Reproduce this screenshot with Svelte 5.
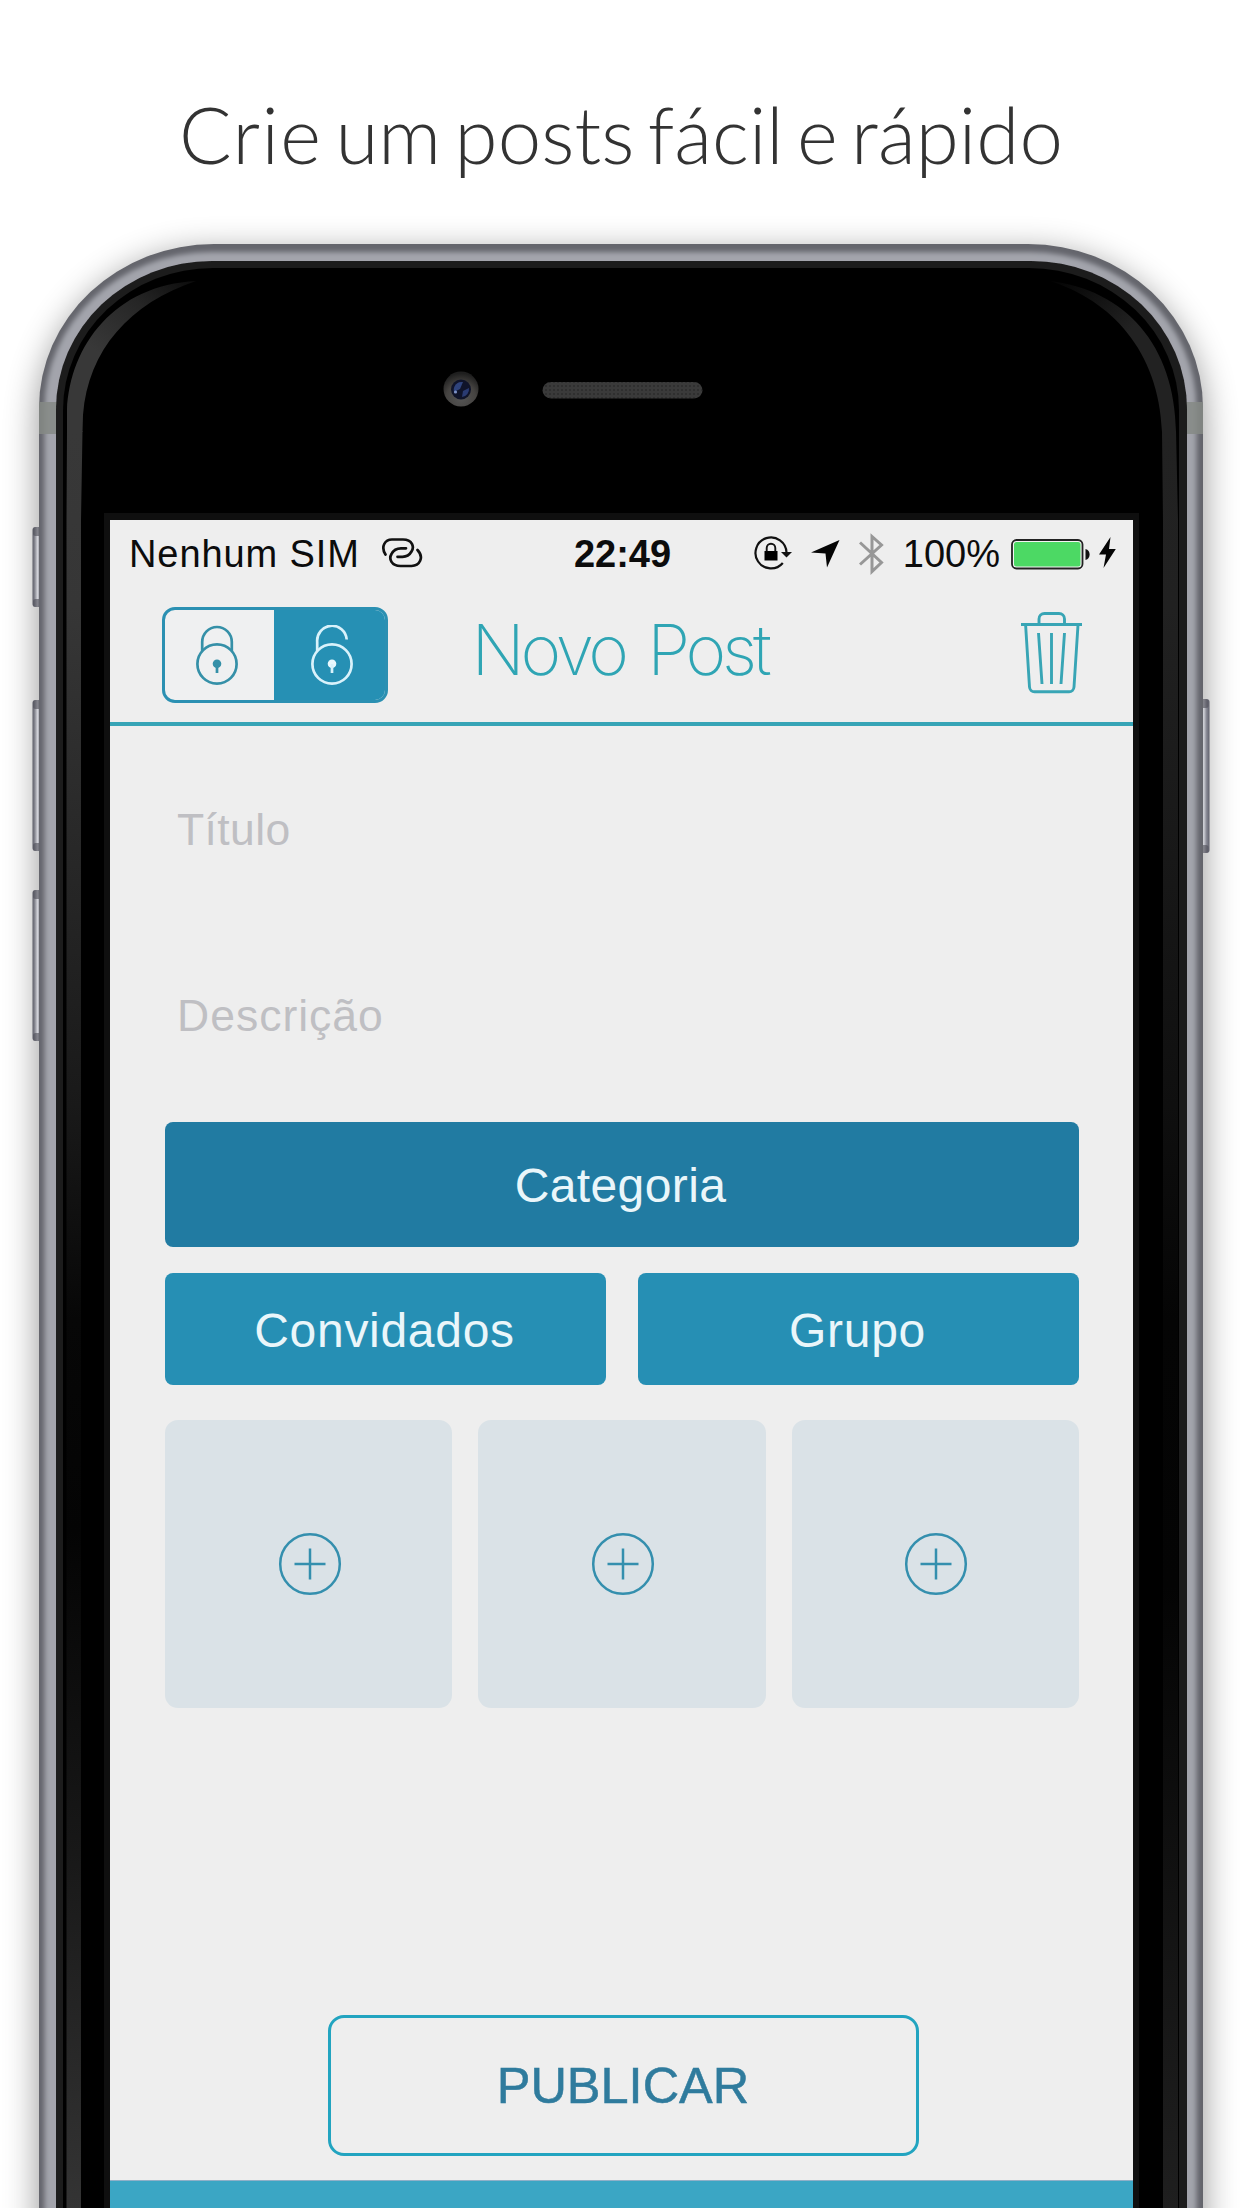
<script>
  const tiles = [0, 1, 2];
  const leftButtons = [
    { y: 527, h: 80 },
    { y: 700, h: 151 },
    { y: 890, h: 151 }
  ];
</script>

<main class="page">
  <svg class="phone" viewBox="0 0 1242 2208" aria-hidden="true">
    <defs>
      <filter id="shadow" x="-10%" y="-10%" width="120%" height="120%"><feGaussianBlur stdDeviation="17" /></filter>
      <filter id="soft" x="-5%" y="-5%" width="110%" height="110%"><feGaussianBlur stdDeviation="2.8" /></filter>
      <filter id="softer" x="-5%" y="-5%" width="110%" height="110%"><feGaussianBlur stdDeviation="0.7" /></filter>
      <linearGradient id="key" x1="0" x2="1"><stop offset="0" stop-color="#5c5d68" /><stop offset=".2" stop-color="#85868f" /><stop offset=".45" stop-color="#d2d3d9" /><stop offset=".7" stop-color="#8b8c97" /><stop offset="1" stop-color="#5f606c" /></linearGradient>
      <linearGradient id="glossL" gradientUnits="userSpaceOnUse" x1="200" y1="270" x2="120" y2="370"><stop offset="0" stop-color="#050505" /><stop offset=".5" stop-color="#262626" /><stop offset="1" stop-color="#383838" /></linearGradient>
      <linearGradient id="glossLDown" gradientUnits="userSpaceOnUse" x1="0" y1="430" x2="0" y2="2208"><stop offset="0" stop-color="#383838" /><stop offset=".1" stop-color="#363636" /><stop offset=".38" stop-color="#191919" /><stop offset=".5" stop-color="#070707" /><stop offset=".62" stop-color="#040404" /><stop offset=".8" stop-color="#181818" /><stop offset="1" stop-color="#343434" /></linearGradient>
      <linearGradient id="glossR" gradientUnits="userSpaceOnUse" x1="1060" y1="280" x2="1120" y2="340"><stop offset="0" stop-color="#050505" /><stop offset="1" stop-color="#222" /></linearGradient>
      <linearGradient id="glossRDown" gradientUnits="userSpaceOnUse" x1="0" y1="430" x2="0" y2="2208"><stop offset="0" stop-color="#222" /><stop offset=".1" stop-color="#212121" /><stop offset=".38" stop-color="#0f0f0f" /><stop offset=".5" stop-color="#050505" /><stop offset=".65" stop-color="#040404" /><stop offset=".85" stop-color="#141414" /><stop offset="1" stop-color="#1f1f1f" /></linearGradient>
      <radialGradient id="lensRing" cx=".5" cy=".75" r=".7"><stop offset="0" stop-color="#555" /><stop offset=".6" stop-color="#454341" /><stop offset="1" stop-color="#1e1e1e" /></radialGradient>
      <pattern id="mesh" width="4" height="4" patternUnits="userSpaceOnUse"><rect width="4" height="4" fill="#3a3a3a" /><circle cx="2" cy="2" r="1" fill="#2b2b2b" /></pattern>
      <clipPath id="bodyClip"><rect x="39" y="244" width="1164" height="2300" rx="175" ry="164" /></clipPath>
    </defs>

    <rect x="38" y="252" width="1166" height="2300" rx="172" fill="#000" opacity=".4" filter="url(#shadow)" />

    {#each leftButtons as b}
      <rect x="32.500" y={b.y} width="11" height={b.h} rx="3" fill="url(#key)" />
      <rect x="33" y={b.y} width="9" height="9" rx="2.500" fill="#4c4d57" opacity=".6" />
      <rect x="33" y={b.y + b.h - 8} width="9" height="8" rx="2.500" fill="#4c4d57" opacity=".6" />
    {/each}
    <rect x="1199" y="699" width="10.500" height="154" rx="3" fill="url(#key)" />
    <rect x="1200" y="699" width="8.500" height="9" rx="2.500" fill="#4c4d57" opacity=".6" />
    <rect x="1200" y="845" width="8.500" height="8" rx="2.500" fill="#4c4d57" opacity=".6" />

    <g clip-path="url(#bodyClip)">
      <rect x="38" y="242" width="1166" height="2300" fill="#64656c" />
      <rect x="44.500" y="252" width="1152" height="2300" rx="167" ry="157" fill="#a3a4ac" filter="url(#soft)" />
      <rect x="38" y="402" width="20" height="32" fill="#858985" opacity=".85" />
      <rect x="1186" y="402" width="18" height="32" fill="#858985" opacity=".85" />
    </g>
    <rect x="56" y="261" width="1131" height="2300" rx="156" ry="148" fill="#1b1b1b" filter="url(#softer)" />
    <rect x="63" y="268" width="1116" height="2300" rx="150" ry="142" fill="#050505" filter="url(#softer)" />
    <path d="M67 432 V410 C70 345 115 285 196 281 C130 303 88 350 83 415 L82.500 432 Z" fill="url(#glossL)" />
    <path d="M67 431 H82.500 L81 520 V2208 H66.500 V520 Z" fill="url(#glossLDown)" />
    <path d="M1176 432 C1175 345 1125 290 1050 281 C1110 300 1159 350 1162 432 Z" fill="url(#glossR)" />
    <path d="M1162 431 H1176 L1178 520 V2208 H1163 V520 Z" fill="url(#glossRDown)" />
    <rect x="104" y="513" width="1035" height="1700" fill="#0f0f0f" />

    <circle cx="461" cy="389" r="17.500" fill="url(#lensRing)" />
    <circle cx="461" cy="389.500" r="10" fill="#10142a" />
    <path d="M454 392 a8 8 0 0 1 9-10 l-3 7 Z" fill="#2f437c" />
    <path d="M462 397 a8 8 0 0 0 7-9 l-6 3 Z" fill="#2a3b72" />
    <circle cx="455.500" cy="392" r="1.600" fill="#7d92c6" />
    <rect x="542.500" y="382" width="160" height="16.500" rx="8.250" fill="url(#mesh)" />
  </svg>

  <h1 class="headline"><span class="first">Crie</span> um posts fácil e rápido</h1>

  <section class="screen">
    <div class="status">
      <div class="status-left">
        <span class="carrier">Nenhum SIM</span>
        <svg width="42" height="30" viewBox="0 0 42 30" fill="none" stroke="#111" stroke-width="2.700" stroke-linecap="round">
          <path d="M4.500 16.500 C-.5 8.500 4 1.500 11 1.500 H22 C31.500 1.500 33.500 9 30.500 13.500 C28.500 17 26 18.800 21.500 18.800 H16.500" />
          <path d="M36.500 12 C43.500 19.500 38.500 28 30.500 28 H19.500 C10.500 28 7.500 21 10.500 16 C12.500 12 16 10.300 20 10.300 H25" />
        </svg>
      </div>
      <span class="time">22:49</span>
      <div class="status-right">
        <svg class="i-lock" width="38" height="34" viewBox="0 0 38 34">
          <path d="M32.500 16.500 A15.500 15.500 0 1 0 28.800 27" fill="none" stroke="#111" stroke-width="2.200" />
          <path d="M27 16 H38 L32.500 21.500 Z" fill="#111" />
          <rect x="10.500" y="15" width="13" height="9.500" fill="#000" />
          <path d="M12.700 15.500 V12 a4.300 4.300 0 0 1 8.600 0 V15.500" fill="none" stroke="#111" stroke-width="1.900" />
        </svg>
        <svg class="i-arrow" width="29" height="28" viewBox="0 0 29 28"><path d="M28.500 0 L16 27.500 L14.500 13.500 L0 12.500 Z" fill="#050505" /></svg>
        <svg class="i-bt" width="25" height="42" viewBox="0 0 25 42" fill="none" stroke="#979797" stroke-width="3"><path d="M1 9.500 L22.500 29.500 L13 38.500 V3.500 L22.500 12 L1 31.500" /></svg>
        <span class="pct">100%</span>
        <svg class="i-batt" width="80" height="31" viewBox="0 0 80 31">
          <rect x="1" y="1" width="70.500" height="28.500" rx="4.500" fill="#f4f4f4" stroke="#222" stroke-width="1.800" />
          <rect x="3" y="3" width="66.500" height="24.500" rx="2.500" fill="#4cd964" />
          <path d="M74.500 10 C80 11 80 20 74.500 21 Z" fill="#111" />
        </svg>
        <svg class="i-bolt" width="17" height="31" viewBox="0 0 17 31"><path d="M11.500 0 L0 17.500 H7 L4.500 31 L16.800 12 H10 Z" fill="#050505" /></svg>
      </div>
    </div>

    <header class="nav">
      <div class="segmented">
        <div class="seg">
          <svg width="44" height="62" viewBox="0 0 44 62" fill="none" stroke="#3590a8" stroke-width="2.700">
            <circle cx="22" cy="39" r="19.600" />
            <path d="M7.200 26 V17 a14.800 15 0 0 1 29.600 0 V26" />
            <circle cx="22" cy="38.700" r="4.300" fill="#3590a8" stroke="none" /><path d="M22 39 V48" />
          </svg>
        </div>
        <div class="seg on">
          <svg width="44" height="62" viewBox="0 0 44 62" fill="none" stroke="#d9f2fb" stroke-width="2.700">
            <circle cx="22" cy="39" r="19.600" />
            <path d="M7.200 26 V17 a14.800 15 0 0 1 29.500 -2.500" />
            <circle cx="22" cy="38.700" r="4.300" fill="#e9f8fd" stroke="none" /><path d="M22 39 V48" />
          </svg>
        </div>
      </div>
      <h2 class="title">Novo Post</h2>
      <svg class="trash" width="62" height="82" viewBox="0 0 62 82" fill="none" stroke="#38a5b5" stroke-width="2.900">
        <path d="M0 12.500 H61" />
        <path d="M18 12 V7 a5.500 5.500 0 0 1 5.500 -5.500 H38 a5.500 5.500 0 0 1 5.500 5.500 V12" />
        <path d="M4.600 13 L8.500 75 a5 5 0 0 0 5 4.700 H48 a5 5 0 0 0 5 -4.700 L57 13" />
        <path d="M17.500 21 L21 72 M30.500 21 V72 M43.500 21 L40 72" />
      </svg>
    </header>

    <div class="form">
      <div class="field">Título</div>
      <div class="field description">Descrição</div>
      <div class="btn category">Categoria</div>
      <div class="pair">
        <div class="btn guests">Convidados</div>
        <div class="btn group">Grupo</div>
      </div>
      <div class="tiles">
        {#each tiles as t (t)}
          <div class="tile">
            <svg width="64" height="64" viewBox="0 0 64 64" fill="none" stroke="#348fae" stroke-width="2.500">
              <circle cx="32" cy="32" r="29.800" />
              <path d="M16.500 32 H47.500 M32 16.500 V47.500" />
            </svg>
          </div>
        {/each}
      </div>
      <div class="publish">PUBLICAR</div>
    </div>

    <footer class="bar"></footer>
  </section>
</main>

<style>
  :global(body) { background: #fff; }
  .page {
    position: relative;
    width: 1242px;
    height: 2208px;
    overflow: hidden;
    background: #fff;
    display: flex;
    flex-direction: column;
    font-family: "Liberation Sans", Arial, sans-serif;
  }
  .phone { position: absolute; inset: 0; width: 1242px; height: 2208px; }
  .headline {
    position: relative;
    margin: 0;
    height: 520px;
    box-sizing: border-box;
    padding-top: 84px;
    text-align: center;
    font: 300 78px/100px Lato, sans-serif;
    letter-spacing: .1px;
    word-spacing: -8px;
    color: #333;
    white-space: nowrap;
  }
  .first { letter-spacing: 1.300px; }
  .screen {
    position: relative;
    width: 1023px;
    flex: 1;
    margin-left: 110px;
    background: #eee;
    display: flex;
    flex-direction: column;
  }
  .status {
    height: 68px;
    display: grid;
    grid-template-columns: 1fr auto 1fr;
    align-items: center;
    padding: 0 17px 0 19px;
    font-size: 38px;
    line-height: 44px;
    color: #0c0c0c;
  }
  .status-left { display: flex; align-items: center; gap: 21px; }
  .status-left svg { margin-top: -2px; }
  .carrier { letter-spacing: .9px; }
  .time { font-weight: 700; }
  .status-right { display: flex; align-items: center; justify-content: flex-end; }
  .i-lock { margin-right: 19px; margin-top: -2px; }
  .i-arrow { margin-right: 19px; }
  .i-bt { margin-right: 19px; }
  .pct { margin-right: 11px; }
  .i-batt { margin-right: 8px; }
  .i-bolt { margin-top: -3px; }
  .nav {
    height: 138px;
    box-sizing: border-box;
    border-bottom: 4px solid #36a4b6;
    padding: 0 50px 0 52px;
    display: grid;
    grid-template-columns: 1fr auto 1fr;
    align-items: center;
  }
  .segmented {
    width: 226px;
    height: 96px;
    box-sizing: border-box;
    border: 3px solid #2b90b2;
    border-radius: 13px;
    overflow: hidden;
    display: grid;
    grid-template-columns: 109px 1fr;
    background: #eff0f1;
  }
  .seg { display: flex; align-items: center; justify-content: center; padding: 2px 5px 0 0; }
  .seg.on { background: #2690b4; padding: 2px 0 0 5px; }
  .title {
    margin: 0 6px 10px 0;
    font: 200 69.500px/84px Inter, sans-serif;
    letter-spacing: -4.200px;
    word-spacing: 7px;
    color: #2fa5b4;
    white-space: nowrap;
  }
  .trash { justify-self: end; margin-bottom: 4px; }
  .form { padding: 11px 54px 0 55px; display: flex; flex-direction: column; }
  .field {
    height: 186px;
    display: flex;
    align-items: center;
    padding-left: 12px;
    font-size: 44.500px;
    letter-spacing: .4px;
    color: #bfbfc3;
  }
  .field.description { letter-spacing: 1px; }
  .btn {
    display: flex;
    align-items: center;
    justify-content: center;
    border-radius: 8px;
    color: #eaf6fa;
    font-size: 48px;
    letter-spacing: .7px;
  }
  .category { margin-top: 13px; height: 125px; background: #217ba2; padding: 2px 3px 0 0; box-sizing: border-box; letter-spacing: .4px; }
  .pair { margin-top: 26px; display: grid; grid-template-columns: 1fr 1fr; gap: 32px; }
  .pair .btn { height: 112px; background: #268fb4; padding: 2px 2px 0 0; box-sizing: border-box; }
  .tiles { margin-top: 35px; display: grid; grid-template-columns: repeat(3, 1fr); gap: 26px; }
  .tile {
    height: 288px;
    border-radius: 13px;
    background: #dae2e7;
    display: flex;
    align-items: center;
    justify-content: center;
    padding-left: 2px;
    box-sizing: border-box;
  }
  .publish {
    margin: 307px 0 0 163px;
    width: 591px;
    height: 141px;
    box-sizing: border-box;
    border: 3px solid #22a4c0;
    border-radius: 16px;
    display: flex;
    align-items: center;
    justify-content: center;
    padding-right: 1px;
    font-size: 50.500px;
    color: #2f7b9d;
    -webkit-text-stroke: .5px #2f7b9d;
  }
  .bar { margin-top: auto; height: 28px; box-sizing: border-box; border-top: 1px solid #8fb0c8; background: #3ba6c4; }
</style>
